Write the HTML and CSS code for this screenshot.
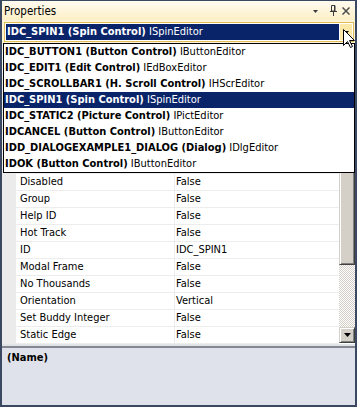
FILE: index.html
```html
<!DOCTYPE html>
<html lang="en">
<head>
  <meta charset="UTF-8">
  <title>Properties</title>
  <link rel="stylesheet" href="styles.css">
</head>
<body>
  <div class="window">
    <div class="titlebar">
      <span class="title">Properties</span>
      <span class="tools">
        <svg class="tool-menu" width="5" height="3" viewBox="0 0 5 3"><polygon points="0,0 5,0 2.5,3" fill="#3a3a3a"/></svg>
        <svg class="tool-pin" width="7" height="11" viewBox="0 0 7 11"><path d="M1.5 0.5h3.5v5.5h-3.5z" fill="none" stroke="#3a3a3a"/><path d="M4.5 0.5v5.5" stroke="#3a3a3a"/><path d="M0 6.5h7M3.5 7v4" stroke="#3a3a3a"/></svg>
        <svg class="tool-close" width="8" height="8" viewBox="0 0 8 8"><path d="M0.5 0.5l7 7M7.5 0.5l-7 7" stroke="#4d4d4d" stroke-width="1.5"/></svg>
      </span>
    </div>

    <div class="object-bar">
      <div class="combo">
        <div class="combo-value"><b>IDC_SPIN1 (Spin Control)</b> ISpinEditor</div>
        <div class="combo-btn"><svg width="5" height="3" viewBox="0 0 5 3"><polygon points="0,0 5,0 2.5,3" fill="#000"/></svg></div>
      </div>
    </div>

    <div class="toolbar"></div>

    <div class="grid">
      <div class="grid-margin"></div>
      <div class="grid-rows">
        <!-- rows under the open list -->
        <div class="row"><span class="name"></span><span class="value"></span></div>
        <div class="row"><span class="name"></span><span class="value"></span></div>
        <div class="row"><span class="name"></span><span class="value"></span></div>
        <div class="row"><span class="name"></span><span class="value"></span></div>
        <div class="row"><span class="name"></span><span class="value"></span></div>
        <div class="row"><span class="name"></span><span class="value"></span></div>
        <div class="row"><span class="name">Disabled</span><span class="value">False</span></div>
        <div class="row"><span class="name">Group</span><span class="value">False</span></div>
        <div class="row"><span class="name">Help ID</span><span class="value">False</span></div>
        <div class="row"><span class="name">Hot Track</span><span class="value">False</span></div>
        <div class="row"><span class="name">ID</span><span class="value">IDC_SPIN1</span></div>
        <div class="row"><span class="name">Modal Frame</span><span class="value">False</span></div>
        <div class="row"><span class="name">No Thousands</span><span class="value">False</span></div>
        <div class="row"><span class="name">Orientation</span><span class="value">Vertical</span></div>
        <div class="row"><span class="name">Set Buddy Integer</span><span class="value">False</span></div>
        <div class="row"><span class="name">Static Edge</span><span class="value">False</span></div>
      </div>
      <div class="vscroll">
        <div class="sb-btn"><svg width="7" height="4" viewBox="0 0 7 4"><polygon points="0,4 7,4 3.5,0" fill="#000"/></svg></div>
        <div class="sb-thumb"></div>
        <div class="sb-track"></div>
        <div class="sb-btn sb-down"><svg width="7" height="4" viewBox="0 0 7 4"><polygon points="0,0 7,0 3.5,4" fill="#000"/></svg></div>
      </div>
    </div>

    <div class="splitter"></div>
    <div class="desc"><b>(Name)</b></div>

    <ul class="object-list">
      <li><b>IDC_BUTTON1 (Button Control)</b> IButtonEditor</li>
      <li><b>IDC_EDIT1 (Edit Control)</b> IEdBoxEditor</li>
      <li><b>IDC_SCROLLBAR1 (H. Scroll Control)</b> IHScrEditor</li>
      <li class="selected"><b>IDC_SPIN1 (Spin Control)</b> ISpinEditor</li>
      <li><b>IDC_STATIC2 (Picture Control)</b> IPictEditor</li>
      <li><b>IDCANCEL (Button Control)</b> IButtonEditor</li>
      <li><b>IDD_DIALOGEXAMPLE1_DIALOG (Dialog)</b> IDlgEditor</li>
      <li><b>IDOK (Button Control)</b> IButtonEditor</li>
    </ul>

    <svg class="cursor" width="13" height="20" viewBox="0 0 13 20"><polygon points="0.5,0.5 0.5,16.5 4.5,12.5 7.5,18.5 9.5,17.5 6.5,11.5 11.5,11.5" fill="#fff" stroke="#000"/></svg>
  </div>
</body>
</html>
```

FILE: styles.css
```css
body {
  margin: 0;
  font-family: "DejaVu Sans Condensed", "Liberation Sans", sans-serif;
  font-size: 11px;
  color: #000;
}
.window {
  position: relative;
  width: 357px;
  height: 407px;
  box-sizing: border-box;
  border: 2px solid #3a4862;
  border-top-width: 1px;
  display: flex;
  flex-direction: column;
  background: #fdf4d6;
  overflow: hidden;
}
.titlebar {
  height: 19px;
  display: flex;
  align-items: center;
  justify-content: space-between;
  padding-left: 2px;
  background: linear-gradient(#fffbf0, #fcefc6);
}
.title {
  font-size: 11.5px;
}
.tools {
  display: flex;
  align-items: center;
  padding-right: 5px;
}
.tool-menu { margin-right: 12px; margin-top: 1px; }
.tool-pin { margin-right: 5px; }

.object-bar {
  height: 24px;
  padding: 2px 1px 0 2px;
  box-sizing: border-box;
}
.combo {
  display: flex;
  border: 1px solid #e3bd58;
  padding: 1px;
  background: #fff;
}
.combo-value {
  flex: 1;
  height: 16px;
  line-height: 16px;
  padding-left: 1px;
  background: #0a246a;
  color: #fff;
  white-space: nowrap;
  overflow: hidden;
}
.combo-btn {
  width: 12px;
  margin-left: 1px;
  display: flex;
  align-items: center;
  justify-content: center;
  background: #fce8a8;
}
.toolbar {
  height: 28px;
  background: #f0f0f0;
}

.grid {
  display: flex;
  height: 272px;
  background: #fff;
}
.grid-margin {
  width: 14px;
  background: #ebebeb;
}
.grid-rows {
  width: 323px;
}
.row {
  display: grid;
  grid-template-columns: 159px 164px;
  height: 17px;
  box-sizing: border-box;
  border-bottom: 1px solid #ededed;
  line-height: 16px;
}
.name {
  padding-left: 4px;
  border-right: 1px solid #ededed;
  white-space: nowrap;
}
.value {
  padding-left: 1px;
  white-space: nowrap;
}
.vscroll {
  width: 16px;
  display: flex;
  flex-direction: column;
}
.sb-btn, .sb-thumb {
  box-sizing: border-box;
  background: #d4d0c8;
  border: 1px solid;
  border-color: #d4d0c8 #404040 #404040 #d4d0c8;
  box-shadow: inset 1px 1px #fff, inset -1px -1px #808080;
}
.sb-btn {
  height: 16px;
  display: flex;
  align-items: center;
  justify-content: center;
}
.sb-down { margin-bottom: 1px; }
.sb-thumb { height: 177px; }
.sb-track {
  flex: 1;
  background-image: conic-gradient(#fff 25%, #d4d0c8 0 50%, #fff 0 75%, #d4d0c8 0);
  background-size: 2px 2px;
}

.splitter {
  height: 4px;
  box-sizing: border-box;
  background: #e2e3e6;
  border-bottom: 2px solid #848891;
}
.desc {
  flex: 1;
  background: #dfe2ea;
  padding: 2px 5px;
  line-height: 16px;
}

.object-list {
  position: absolute;
  left: 1px;
  top: 42px;
  width: 352px;
  box-sizing: border-box;
  margin: 0;
  padding: 0;
  list-style: none;
  background: #fff;
  border: 1px solid #000;
}
.object-list li {
  height: 16px;
  line-height: 16px;
  padding-left: 1px;
  white-space: nowrap;
}
.object-list .selected {
  background: #0a246a;
  color: #fff;
}
.cursor {
  position: absolute;
  left: 341px;
  top: 28px;
}
```
